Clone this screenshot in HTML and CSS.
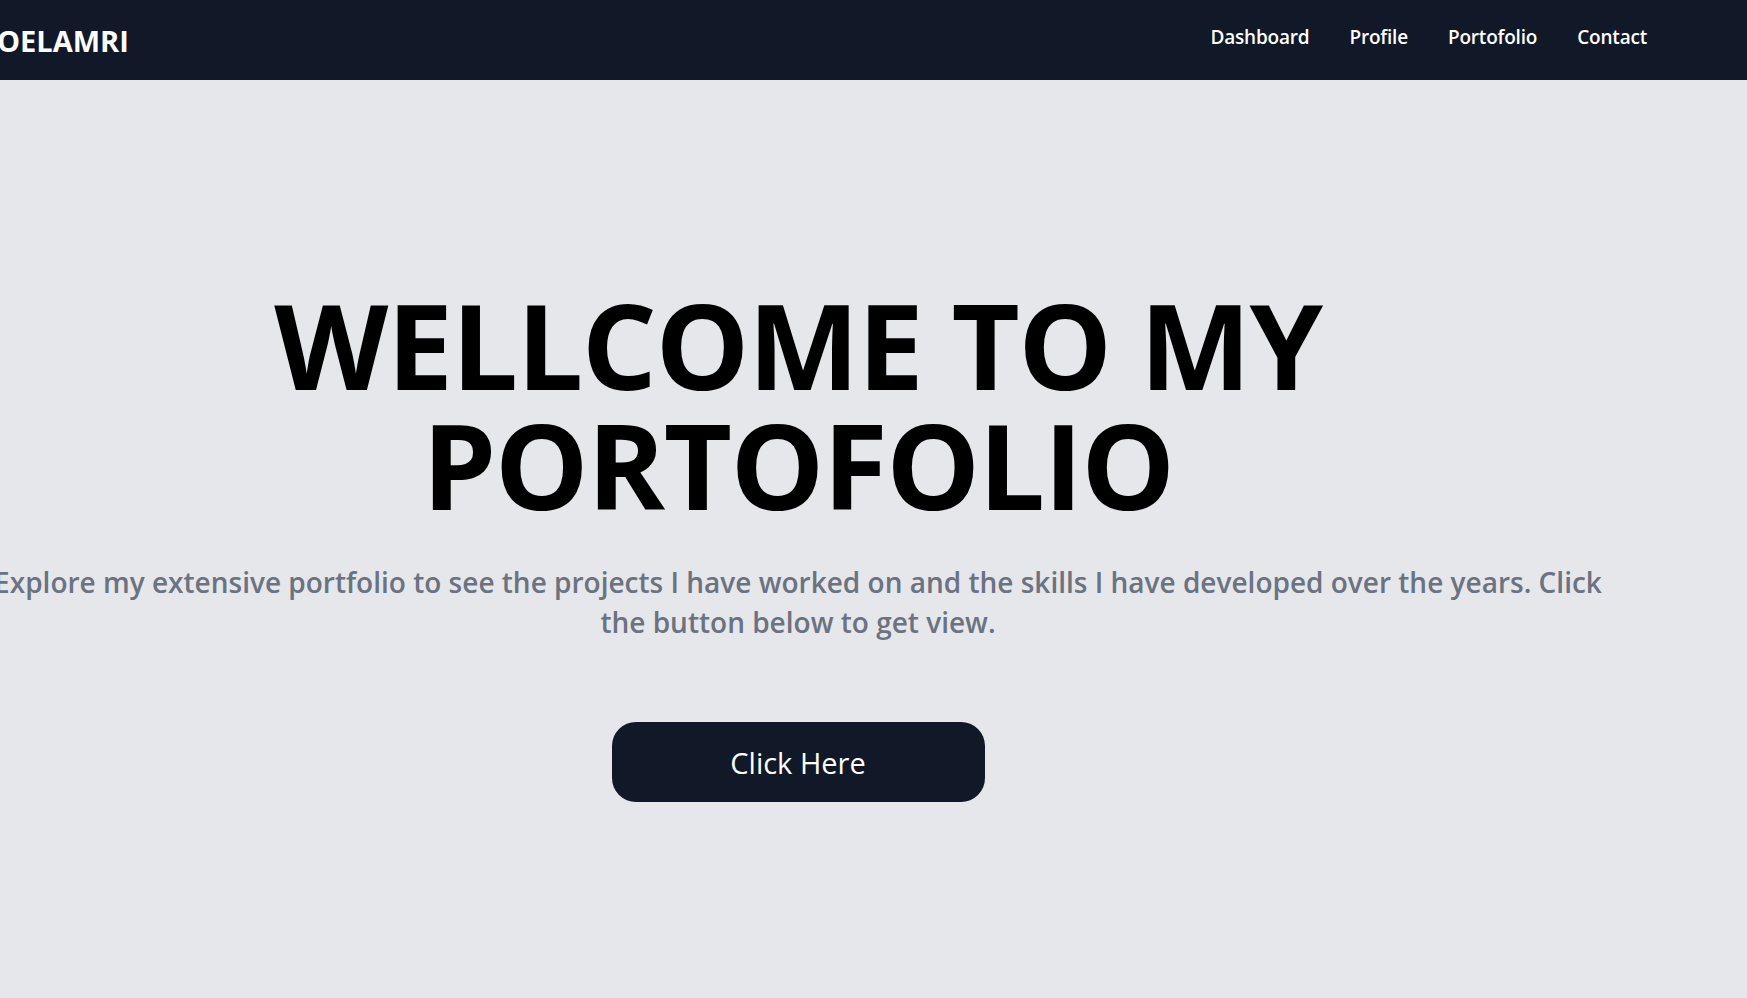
FILE: index.html
```html
<!DOCTYPE html>
<html lang="en">
<head>
<meta charset="utf-8">
<title>Portofolio</title>
<link rel="stylesheet" href="styles.css">
</head>
<body>
<header class="navbar">
  <div class="logo">OELAMRI</div>
  <nav>
    <ul class="nav-links">
      <li><a href="#">Dashboard</a></li>
      <li><a href="#">Profile</a></li>
      <li><a href="#">Portofolio</a></li>
      <li><a href="#">Contact</a></li>
    </ul>
  </nav>
</header>
<main class="hero">
  <h1 class="hero-title">WELLCOME TO MY PORTOFOLIO</h1>
  <p class="hero-text">Explore my extensive portfolio to see the projects I have worked on and the skills I have developed over the years. Click the button below to get view.</p>
  <a class="hero-btn" href="#">Click Here</a>
</main>
</body>
</html>
```

FILE: styles.css
```css
* { box-sizing: border-box; }
html, body {
  margin: 0;
  padding: 0;
  overflow: hidden;
}
body {
  background: #e5e7eb;
  font-family: "Open Sans", "Noto Sans", sans-serif;
  height: 998px;
}
.navbar {
  background: #111827;
  height: 80px;
  display: flex;
  justify-content: space-between;
  align-items: flex-start;
}
.logo {
  color: #ffffff;
  font-weight: 700;
  font-size: 29px;
  line-height: 29px;
  margin-left: -3px;
  padding-top: 26px;
}
.nav-links {
  list-style: none;
  margin: 0;
  padding: 25px 100px 0 0;
  display: flex;
  gap: 40px;
}
.nav-links a {
  color: #ffffff;
  text-decoration: none;
  font-weight: 600;
  font-size: 19px;
  line-height: 24px;
  letter-spacing: -0.2px;
}
.hero {
  width: 1644px;
  margin-left: -24px;
  display: flex;
  flex-direction: column;
  align-items: center;
  text-align: center;
}
.hero-title {
  margin: 205px 0 0;
  font-size: 118px;
  line-height: 120px;
  font-weight: 700;
  letter-spacing: -1.5px;
  color: #000000;
  max-width: 1300px;
}
.hero-text {
  margin: 37px 0 0;
  font-size: 28px;
  line-height: 40px;
  font-weight: 600;
  color: #6b7280;
}
.hero-btn {
  margin-top: 80px;
  width: 373px;
  height: 80px;
  border-radius: 24px;
  background: #111827;
  color: #ffffff;
  text-decoration: none;
  font-size: 29px;
  display: flex;
  align-items: center;
  justify-content: center;
}
```
